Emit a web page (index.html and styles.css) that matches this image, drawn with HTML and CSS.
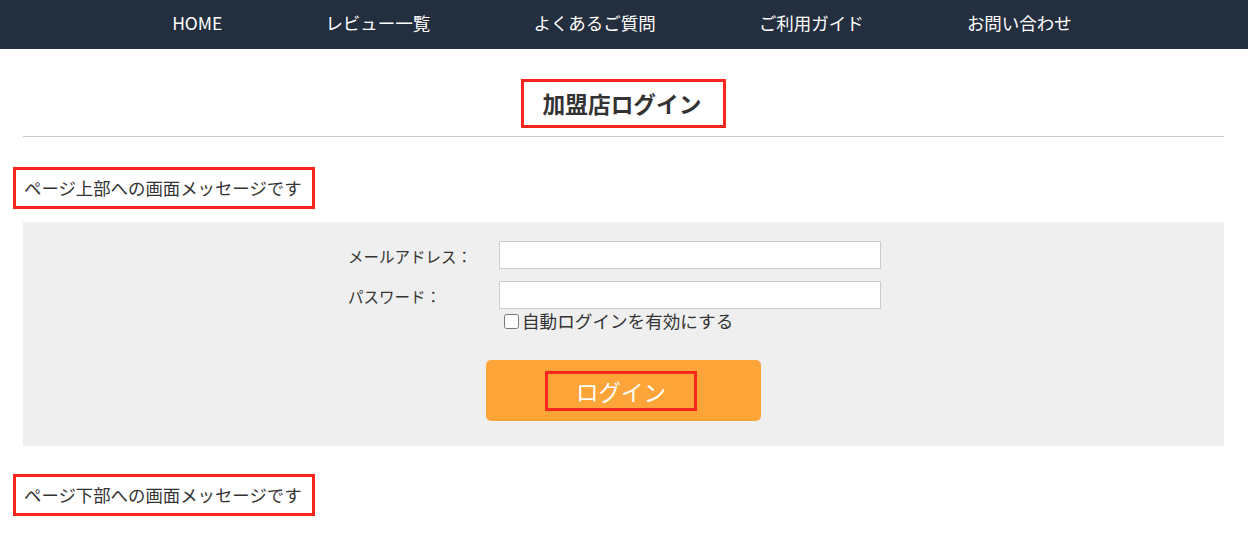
FILE: index.html
```html
<!DOCTYPE html>
<html lang="ja">
<head>
    <meta charset="UTF-8">
    <meta name="viewport" content="width=device-width, initial-scale=1.0">
    <title>加盟店ログイン</title>
    <link rel="stylesheet" href="styles.css">
</head>
<body>
    <div class="nav">
        <a href="#">HOME</a>
        <a href="#">レビュー一覧</a>
        <a href="#">よくあるご質問</a>
        <a href="#">ご利用ガイド</a>
        <a href="#">お問い合わせ</a>
    </div>

    <div class="main">
        <div class="title-wrap">
            <h1 class="title">加盟店ログイン</h1>
        </div>

        <div class="message">ページ上部への画面メッセージです</div>

        <div class="panel">
            <div class="login-form">
                <label class="form-label" for="email">メールアドレス：</label>
                <input type="text" id="email">
                <label class="form-label" for="password">パスワード：</label>
                <div>
                    <input type="password" id="password">
                    <label class="remember"><input type="checkbox">自動ログインを有効にする</label>
                </div>
            </div>
            <button class="login-btn"><span>ログイン</span></button>
        </div>

        <div class="message bottom">ページ下部への画面メッセージです</div>
    </div>
</body>
</html>
```

FILE: styles.css
```css
* {
    margin: 0;
    padding: 0;
    box-sizing: border-box;
}

body {
    font-family: "Noto Sans CJK JP", "Noto Sans", sans-serif;
    color: #333;
    background: #fff;
}

.nav {
    height: 49px;
    background: #232e3e;
    display: flex;
    justify-content: center;
    align-items: center;
    gap: 103px;
    padding-bottom: 4px;
    padding-right: 4px;
}

.nav a {
    color: #fff;
    text-decoration: none;
    font-size: 17.5px;
}

.main {
    padding: 0 24px 0 23px;
}

.title-wrap {
    text-align: center;
    padding-top: 30px;
    padding-bottom: 8px;
    border-bottom: 1px solid #ccc;
}

.title {
    display: inline-block;
    font-size: 22.7px;
    font-weight: bold;
    line-height: 31px;
    padding: 6px 22px 6px 19px;
    border: 3px solid #f8261c;
}

.message {
    display: inline-block;
    margin: 30px 0 0 -10px;
    padding: 5px 10px 5px 8px;
    font-size: 17.4px;
    line-height: 26px;
    border: 3px solid #f8261c;
}

.message.bottom {
    margin-top: 28px;
}

.panel {
    margin-top: 13px;
    background: #efefef;
    padding: 19px 0 25px;
}

.login-form {
    width: 551px;
    margin: 0 auto;
    display: grid;
    grid-template-columns: 151px 382px;
    row-gap: 12px;
    align-items: start;
}

.form-label {
    font-size: 15.5px;
    line-height: 25px;
    padding-top: 3px;
    height: 28px;
}

.login-form input[type="text"],
.login-form input[type="password"] {
    display: block;
    width: 382px;
    height: 28px;
    border: 1px solid #ccc;
    background: #fff;
}

.remember {
    display: flex;
    align-items: center;
    font-size: 17.6px;
    line-height: 24px;
    margin-top: 0;
    margin-left: 5px;
}

.remember input {
    width: 15px;
    height: 15px;
    margin: 0 3px 0 0;
}

.login-btn {
    display: flex;
    justify-content: center;
    align-items: center;
    width: 275px;
    height: 61px;
    margin: 27px auto 0;
    border: none;
    border-radius: 5px;
    background: #fea53a;
    color: #fff;
    font-family: inherit;
    font-size: 22.5px;
    cursor: pointer;
}

.login-btn span {
    display: block;
    width: 152px;
    height: 40px;
    line-height: 34px;
    border: 3px solid #f8261c;
    margin-right: 5px;
}
```
